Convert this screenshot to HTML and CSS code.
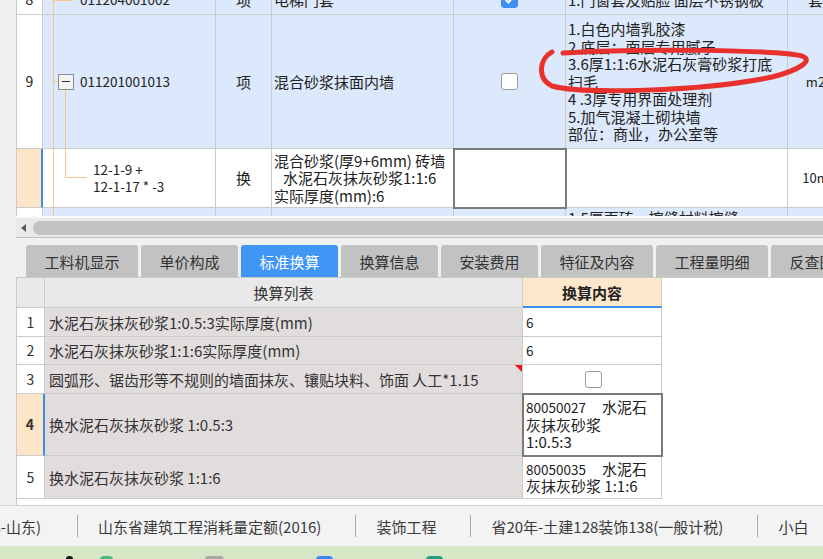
FILE: index.html
```html
<!DOCTYPE html>
<html lang="zh">
<head>
<meta charset="utf-8">
<title>标准换算</title>
<link rel="stylesheet" href="styles.css">
</head>
<body>
<div class="screen">
  <div class="workspace">
    <div class="gutter"></div>
    <div class="main">
      <div class="upper">
        <div class="tgrid">
          <!-- row 8 -->
          <div class="c num">8</div>
          <div class="c code blue t8"><span class="n">011204001002</span></div>
          <div class="c ctr blue">项</div>
          <div class="c blue">电梯门套</div>
          <div class="c ctr blue"><span class="cb on"><svg width="15" height="15" viewBox="0 0 15 15"><path d="M3.5 7.5 L6.5 10.5 L11.5 4.5" fill="none" stroke="#fff" stroke-width="2"/></svg></span></div>
          <div class="c blue">1.门窗套及贴脸 面层不锈钢板</div>
          <div class="c ctr blue">套</div>
          <!-- row 9 -->
          <div class="c num">9</div>
          <div class="c code blue t9"><span class="box"></span><span class="n">011201001013</span></div>
          <div class="c ctr blue">项</div>
          <div class="c blue">混合砂浆抹面内墙</div>
          <div class="c ctr blue"><span class="cb"></span></div>
          <div class="c blue">
            <div class="lines">
              <div>1.白色内墙乳胶漆</div>
              <div>2.底层：面层专用腻子</div>
              <div>3.6厚1:1:6水泥石灰膏砂浆打底</div>
              <div>扫毛</div>
              <div>4 .3厚专用界面处理剂</div>
              <div>5.加气混凝土砌块墙</div>
              <div>部位：商业，办公室等</div>
            </div>
          </div>
          <div class="c ctr blue sm">m2</div>
          <!-- child row -->
          <div class="c num sel"></div>
          <div class="c code tc">
            <div class="lines n"><div>12-1-9 +</div><div>12-1-17 * -3</div></div>
          </div>
          <div class="c ctr">换</div>
          <div class="c">
            <div class="lines">
              <div>混合砂浆(厚9+6mm) 砖墙</div>
              <div class="ind">水泥石灰抹灰砂浆1:1:6</div>
              <div>实际厚度(mm):6</div>
            </div>
          </div>
          <div class="c cur"></div>
          <div class="c"></div>
          <div class="c ctr sm">10m</div>
          <!-- row 10 -->
          <div class="c num"></div>
          <div class="c code blue t10"></div>
          <div class="c blue"></div>
          <div class="c blue"></div>
          <div class="c blue"></div>
          <div class="c blue top">1.5厚面砖，擦缝材料擦缝</div>
          <div class="c blue"></div>
        </div>
      </div>
      <div class="hscroll"><span class="arrow"></span><span class="thumb"></span></div>
      <div class="tabs">
        <div class="tab">工料机显示</div>
        <div class="tab">单价构成</div>
        <div class="tab on">标准换算</div>
        <div class="tab">换算信息</div>
        <div class="tab">安装费用</div>
        <div class="tab">特征及内容</div>
        <div class="tab">工程量明细</div>
        <div class="tab">反查图形工程量</div>
      </div>
      <div class="lower">
        <div class="lgrid">
          <div class="h"></div>
          <div class="h hl">换算列表</div>
          <div class="h hc">换算内容</div>

          <div class="r rn">1</div>
          <div class="r rl">水泥石灰抹灰砂浆1:0.5:3实际厚度(mm)</div>
          <div class="r rc"><span class="n">6</span></div>

          <div class="r rn">2</div>
          <div class="r rl">水泥石灰抹灰砂浆1:1:6实际厚度(mm)</div>
          <div class="r rc"><span class="n">6</span></div>

          <div class="r rn">3</div>
          <div class="r rl flag">圆弧形、锯齿形等不规则的墙面抹灰、镶贴块料、饰面 人工*1.15</div>
          <div class="r rc ctr"><span class="cb"></span></div>

          <div class="r rn sel b">4</div>
          <div class="r rl">换水泥石灰抹灰砂浆 1:0.5:3</div>
          <div class="r rc cur">
            <div class="lines2"><div><span class="n">80050027</span><span class="gap"></span>水泥石</div><div>灰抹灰砂浆</div><div>1:0.5:3</div></div>
          </div>

          <div class="r rn">5</div>
          <div class="r rl">换水泥石灰抹灰砂浆 1:1:6</div>
          <div class="r rc">
            <div class="lines2"><div><span class="n">80050035</span><span class="gap"></span>水泥石</div><div>灰抹灰砂浆 1:1:6</div></div>
          </div>
        </div>
      </div>
    </div>
  </div>
  <div class="status">
    <div class="clip"><span>8-山东)</span></div>
    <div class="sep"></div>
    <div class="si">山东省建筑工程消耗量定额(2016)</div>
    <div class="sep"></div>
    <div class="si">装饰工程</div>
    <div class="sep"></div>
    <div class="si">省20年-土建128装饰138(一般计税)</div>
    <div class="sep"></div>
    <div class="si">小白</div>
  </div>
  <div class="taskbar">
    <span class="ic i1"></span><span class="ic i2"></span><span class="ic i3"></span><span class="ic i4"></span><span class="ic i5"></span>
  </div>
  <svg class="annot" width="823" height="559" viewBox="0 0 823 559">
    <path d="M552 52 C540 58, 536 78, 552 86 C580 94, 700 92, 772 77 C800 70, 814 60, 802 56 C780 50, 640 48, 563 53" fill="none" stroke="#e8302c" stroke-width="5" stroke-linecap="round" stroke-linejoin="round"/>
  </svg>
</div>
</body>
</html>
```
FILE: styles.css
```css
* { box-sizing: border-box; margin: 0; padding: 0; }
html, body { width: 823px; height: 559px; overflow: hidden; }
body {
  font-family: "Noto Sans CJK SC", "Noto Sans", sans-serif;
  color: #222;
  background: #fff;
}
.screen { position: relative; width: 823px; height: 559px; display: flex; flex-direction: column; }
.workspace { display: flex; height: 505px; flex: none; }
.gutter { width: 16px; flex: none; background: #f0f0f0; }
.main { flex: 1; min-width: 0; display: flex; flex-direction: column; }

/* upper grid */
.upper { height: 216px; flex: none; overflow: hidden; border-left: 1px solid #c9c9c9; background: #fff; }
.tgrid {
  display: grid;
  grid-template-columns: 26px 173px 56px 182px 112px 222px 56px;
  grid-template-rows: 30px 134px 59px 40px;
  width: 827px;
  margin-top: -15px;
  font-size: 15px;
  line-height: 17.5px;
}
.c {
  border-right: 1px solid #cbcbcb;
  border-bottom: 1px solid #cbcbcb;
  display: flex;
  align-items: center;
  white-space: nowrap;
  overflow: hidden;
  padding: 0 2px;
  background: #fff;
}
.c.blue { background-color: #dce8fb; }
.ctr { justify-content: center; }
.num { justify-content: center; font-size: 14px; }
.sel { background: #fde5c8; border-right: 2px solid #3b8ee8; }
.top { align-items: flex-start; padding-top: 1px; }
.sm { font-size: 13px; }
.n { font-size: 13.5px; }
.lines > div { height: 17.5px; }
.ind { padding-left: 9px; }
.cur { outline: 2px solid #7a7a7a; outline-offset: -1px; position: relative; z-index: 1; }

.code { --o: #f7c78f; }
.t8 {
  padding-left: 37px;
  background: linear-gradient(var(--o), var(--o)) 10px 0 / 1px 100% no-repeat,
              linear-gradient(var(--o), var(--o)) 10px 15px / 20px 1px no-repeat,
              #dce8fb;
}
.t9 {
  padding-left: 15px;
  background: linear-gradient(var(--o), var(--o)) 10px 0 / 1px 100% no-repeat,
              linear-gradient(var(--o), var(--o)) 10px 50% / 6px 1px no-repeat,
              linear-gradient(var(--o), var(--o)) 22px 100% / 1px 50% no-repeat,
              #dce8fb;
}
.tc {
  padding-left: 50px;
  background: linear-gradient(var(--o), var(--o)) 10px 0 / 1px 100% no-repeat,
              linear-gradient(var(--o), var(--o)) 22px 0 / 1px 29px no-repeat,
              linear-gradient(var(--o), var(--o)) 22px 28px / 22px 1px no-repeat,
              #fff;
}
.t10 {
  background: linear-gradient(var(--o), var(--o)) 10px 0 / 1px 100% no-repeat, #dce8fb;
}
.box {
  width: 16px; height: 16px; flex: none;
  border: 1px solid #8c8c8c;
  background: #f3f3f3;
  margin-right: 6px;
  display: flex; align-items: center; justify-content: center;
}
.box::before { content: ""; width: 8px; height: 1px; background: #333; }

.cb {
  width: 17px; height: 17px; flex: none;
  border: 1px solid #9c9c9c;
  border-radius: 3px;
  background: #fff;
  display: flex; align-items: center; justify-content: center;
}
.cb.on { background: #3d8ff0; border-color: #3d8ff0; }

/* scrollbar */
.hscroll {
  height: 22px; flex: none;
  display: flex; align-items: center; gap: 7px;
  padding-left: 5px;
  background: #e9e9e9;
  border-top: 2px solid #f8f8f8;
  border-bottom: 1px solid #c0c0c0;
}
.arrow { width: 0; height: 0; border-top: 4.5px solid transparent; border-bottom: 4.5px solid transparent; border-right: 5px solid #5a5a5a; }
.thumb { flex: 1; height: 14px; border-radius: 7px 0 0 7px; background: #c3c3c3; }

/* tabs */
.tabs {
  height: 39px; flex: none;
  display: flex; align-items: flex-end; gap: 3px;
  padding-left: 10px;
  background: #f0f0f0;
  overflow: hidden;
}
.tab {
  flex: none;
  height: 32px;
  padding: 0 18.5px;
  display: flex; align-items: center;
  background: #c2c2c2;
  border-radius: 3px 3px 0 0;
  font-size: 15px;
  color: #333;
  white-space: nowrap;
}
.tab.on { background: #3f96f5; color: #fff; }

/* lower grid */
.lower { flex: 1; border-left: 1px solid #c9c9c9; border-top: 1px solid #c9c9c9; background: #fff; }
.lgrid {
  display: grid;
  grid-template-columns: 28px 478px 139px;
  grid-template-rows: 30px 29px 28px 29px 62px 43px;
  width: 645px;
  font-size: 15px;
  line-height: 17px;
}
.h, .r {
  border-right: 1px solid #cbcbcb;
  border-bottom: 1px solid #cbcbcb;
  display: flex; align-items: center;
  white-space: nowrap; overflow: hidden;
}
.h { background: #e9e9e9; color: #333; justify-content: center; }
.hc { background: #fde8cb; font-weight: bold; color: #222; border-bottom: 2px solid #3b8ee8; }
.rn { justify-content: center; background: #fff; font-size: 14px; color: #333; }
.rn.sel { background: #fde5c8; border-right: 2px solid #3b8ee8; }
.b { font-weight: bold; }
.rl { background: #e1dddc; padding-left: 4px; color: #333; }
.rc { background: #fff; padding-left: 3px; color: #222; }
.lines2 > div { height: 17.5px; }
.gap { display: inline-block; width: 16px; }
.flag { position: relative; }
.flag::after {
  content: ""; position: absolute; top: 0; right: 0;
  border-top: 7px solid #f01010; border-left: 7px solid transparent;
}

/* status bar */
.status {
  height: 41px; flex: none;
  border-top: 1px solid #d3d3d3;
  background: #f3f3f3;
  display: flex; align-items: center;
  font-size: 15px; color: #3a3a3a;
  white-space: nowrap;
  overflow: hidden;
}
.status > * { flex: none; }
.clip { width: 41px; overflow: hidden; display: flex; justify-content: flex-end; margin-right: 36px; }
.clip > span { flex: none; }
.sep { width: 1px; height: 22px; background: #a9a9a9; }
.si { padding: 0 34px 0 20px; }

/* taskbar */
.taskbar { height: 13px; flex: none; background: #d7e7c6; display: flex; align-items: flex-start; }
.ic { height: 6px; margin-top: 10px; border-radius: 4px 4px 0 0; flex: none; }
.i1 { width: 7px; margin-left: 66px; background: #111; border-radius: 50% 50% 0 0; }
.i2 { width: 13px; margin-left: 27px; background: #4bb77e; }
.i3 { width: 19px; margin-left: 92px; background: #a7a7a7; }
.i4 { width: 17px; margin-left: 92px; background: #3b84f2; }
.i5 { width: 17px; margin-left: 93px; background: #1f9f7f; }

.annot { position: absolute; left: 0; top: 0; pointer-events: none; }
```
